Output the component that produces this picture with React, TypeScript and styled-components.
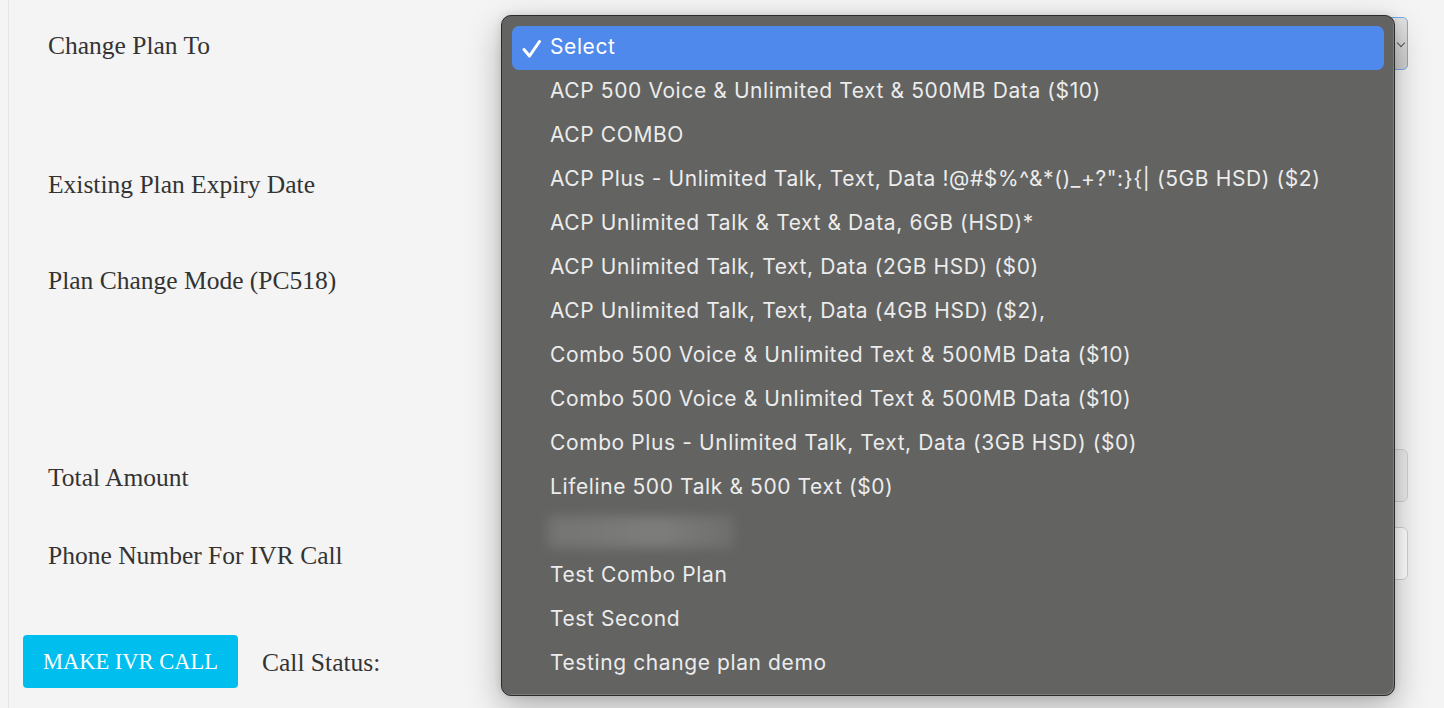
import React from "react";
import styled, { createGlobalStyle } from "styled-components";

const plans = [
  "ACP 500 Voice & Unlimited Text & 500MB Data ($10)",
  "ACP COMBO",
  'ACP Plus - Unlimited Talk, Text, Data !@#$%^&*()_+?":}{| (5GB HSD) ($2)',
  "ACP Unlimited Talk & Text & Data, 6GB (HSD)*",
  "ACP Unlimited Talk, Text, Data (2GB HSD) ($0)",
  "ACP Unlimited Talk, Text, Data (4GB HSD) ($2),",
  "Combo 500 Voice & Unlimited Text & 500MB Data ($10)",
  "Combo 500 Voice & Unlimited Text & 500MB Data ($10)",
  "Combo Plus - Unlimited Talk, Text, Data (3GB HSD) ($0)",
  "Lifeline 500 Talk & 500 Text ($0)",
  null,
  "Test Combo Plan",
  "Test Second",
  "Testing change plan demo",
];

const GlobalStyle = createGlobalStyle`
  html, body {
    margin: 0;
    padding: 0;
    background: #f4f4f4;
  }
  body {
    font-family: "Liberation Serif", "Times New Roman", serif;
    color: #333;
  }
`;

const Page = styled.div`
  position: relative;
  height: 708px;
  margin-left: 8px;
  border-left: 1px solid #e4e4e4;
  overflow: hidden;
`;

const Form = styled.div`
  display: flex;
  flex-direction: column;
  padding: 17px 36px 0 39px;
`;

const Row = styled.div<{ $top: number; $h: number }>`
  display: grid;
  grid-template-columns: 460px 1fr;
  align-items: center;
  height: ${(p) => p.$h}px;
  margin-top: ${(p) => p.$top}px;
`;

const Label = styled.div`
  font-size: 25.5px;
  line-height: 30px;
  padding-top: 5px;
  color: #333;
`;

const SelectBox = styled.div`
  height: 53px;
  border: 1px solid #74aee8;
  border-radius: 5px;
  background: linear-gradient(#e2e2e2, #cfcfcf);
  position: relative;
  box-sizing: border-box;
`;

const Chevron = styled.span`
  position: absolute;
  right: 3px;
  top: 22px;
  width: 5px;
  height: 5px;
  border-right: 1.5px solid #555;
  border-bottom: 1.5px solid #555;
  transform: rotate(45deg);
`;

const Input = styled.div<{ $disabled?: boolean }>`
  height: 53px;
  box-sizing: border-box;
  border: 1px solid #d2d2d2;
  border-radius: 6px;
  background: ${(p) => (p.$disabled ? "#ebebeb" : "#ffffff")};
`;

const ActionRow = styled.div`
  display: flex;
  align-items: center;
  gap: 24px;
  margin-top: 55px;
  margin-left: -25px;
`;

const StatusLabel = styled(Label)`
  padding-top: 2px;
`;

const CallButton = styled.button`
  height: 53px;
  padding: 0 20px;
  border: none;
  border-radius: 4px;
  background: #00bfee;
  color: #fff;
  font-family: "Liberation Serif", "Times New Roman", serif;
  font-size: 22.5px;
  text-transform: uppercase;
`;

const Popup = styled.div`
  position: absolute;
  left: 492px;
  top: 15px;
  width: 894px;
  height: 681px;
  box-sizing: border-box;
  padding: 10px;
  background: #636361;
  border: 1px solid #2b2b2b;
  border-radius: 10px;
  box-shadow: inset -1px -1px 0 #7c7c7a, 0 12px 34px rgba(0, 0, 0, 0.28),
    0 0 8px rgba(0, 0, 0, 0.12);
  font-family: Inter, "Liberation Sans", sans-serif;
`;

const Option = styled.div<{ $active?: boolean }>`
  position: relative;
  height: 44px;
  display: flex;
  align-items: center;
  padding-left: 38px;
  padding-bottom: 4px;
  box-sizing: border-box;
  border-radius: 7px;
  font-size: 21px;
  letter-spacing: 0.6px;
  color: ${(p) => (p.$active ? "#ffffff" : "#ececec")};
  background: ${(p) => (p.$active ? "#5089ec" : "transparent")};
  white-space: nowrap;
`;

const Check = styled.svg`
  position: absolute;
  left: 9px;
  top: 12px;
`;

const Blurred = styled.span`
  display: block;
  width: 186px;
  height: 32px;
  margin-left: -2px;
  margin-top: 4px;
  background: linear-gradient(90deg, #747473, #7d7d7c 60%, #6e6e6d);
  filter: blur(6px);
`;

export default function App() {
  return (
    <Page>
      <GlobalStyle />
      <Form>
        <Row $top={0} $h={53}>
          <Label>Change Plan To</Label>
          <SelectBox>
            <Chevron />
          </SelectBox>
        </Row>
        <Row $top={86} $h={52}>
          <Label>Existing Plan Expiry Date</Label>
          <div />
        </Row>
        <Row $top={44} $h={52}>
          <Label>Plan Change Mode (PC518)</Label>
          <div />
        </Row>
        <Row $top={145} $h={52}>
          <Label>Total Amount</Label>
          <Input $disabled />
        </Row>
        <Row $top={26} $h={53}>
          <Label>Phone Number For IVR Call</Label>
          <Input />
        </Row>
        <ActionRow>
          <CallButton>Make IVR Call</CallButton>
          <StatusLabel>Call Status:</StatusLabel>
        </ActionRow>
      </Form>

      <Popup>
        <Option $active>
          <Check width="22" height="22" viewBox="0 0 22 22">
            <path
              d="M3 11.5 L8.5 18 L18.5 3.5"
              fill="none"
              stroke="#fff"
              strokeWidth="3"
              strokeLinecap="round"
              strokeLinejoin="round"
            />
          </Check>
          Select
        </Option>
        {plans.map((p, i) => (
          <Option key={i}>{p === null ? <Blurred /> : p}</Option>
        ))}
      </Popup>
    </Page>
  );
}
